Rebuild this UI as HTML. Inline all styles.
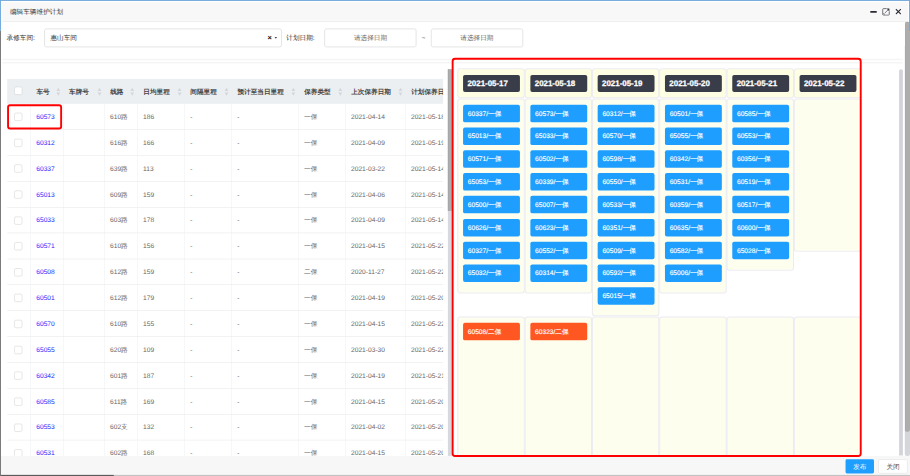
<!DOCTYPE html>
<html><head><meta charset="utf-8"><title>plan</title><style>
*{box-sizing:border-box;margin:0;padding:0}
html,body{width:910px;height:476px;overflow:hidden;background:#fff}
body{font-family:"Liberation Sans",sans-serif;}
#root{position:absolute;left:0;top:0;width:1920px;height:1005px;transform:scale(0.47396);transform-origin:0 0;font-size:14px;color:#666;overflow:hidden;background:#fff;text-rendering:geometricPrecision}
.abs{position:absolute}
.title{left:4.6px;top:4.6px;width:1911px;height:38.2px;background:#f8f8f8}
.ttext{left:21px;top:4.6px;line-height:38px;font-size:14px;color:#333;white-space:nowrap}
.inp{height:40.5px;top:59.9px;border:2px solid #e4e4e4;border-radius:5px;background:#fff;font-size:14px;line-height:36.5px;white-space:nowrap}
.lab{top:60px;line-height:40.5px;font-size:14px;color:#2b2b2b;white-space:nowrap}
table{border-collapse:collapse;table-layout:fixed}
th{height:52.6px;font-weight:bold;color:#444;text-align:left;font-size:14px;padding:2.5px 0 0 12px;line-height:20px;position:relative;white-space:nowrap}
th:first-child{padding-left:11.2px}
td{height:54.64px;border-bottom:1px solid #e4e4e4;border-right:1px solid #eceef3;padding:0 0 0 11.2px;font-size:14px;line-height:20px;color:#666;white-space:nowrap;overflow:hidden}
td a{color:#1c1cff;text-decoration:none}
.cb{display:block;width:17px;height:17px;border:1.6px solid #cdcdcd;border-radius:3.5px;background:#fff;margin-left:4.5px;position:relative;top:0.7px}
th .cb{top:-2px}
.sort{position:absolute;right:5.8px;top:19.1px;width:9px;height:17px}
.sort:before,.sort:after{content:"";position:absolute;left:0;border:4.5px solid transparent}
.sort:before{top:0;border-bottom:7.5px solid #d3d6da;border-top:0}
.sort:after{bottom:0;border-top:7.5px solid #d3d6da;border-bottom:0}
.cell{position:absolute;width:137.8px;background:#fefeef;box-shadow:0 0 0 2.2px #ebebf3;border-radius:4px;padding:11px 8.3px 0 10.3px}
.cell.hd{background:#fefee2}
.pill{height:36.4px;border-radius:4px;background:#393d49;color:#fff;font-weight:bold;font-size:16.7px;line-height:38px;padding-left:8.8px;white-space:nowrap;margin-top:0.6px;-webkit-text-stroke:0.55px #fff}
.it{height:37px;border-radius:4px;background:#1e9fff;color:#fff;font-size:14px;line-height:37px;padding-left:9.5px;margin-bottom:11.2px;white-space:nowrap;-webkit-text-stroke:0.3px #fff}
.it.o{background:#ff5722}
</style></head><body><div id="root">
<div class="abs title"></div>
<div class="abs" style="left:4.6px;top:44.3px;width:1911px;height:2px;background:#ececec"></div>
<div class="abs ttext">编辑车辆维护计划</div>
<div class="abs" style="left:1835.6px;top:23.42px;width:14.77px;height:4.01px;background:#2b2b36;border-radius:1px"></div>
<svg class="abs" style="left:1860.92px;top:16.67px" width="16.67" height="16.25" viewBox="0 0 16 16"><path d="M9 1.2H2.6A1.4 1.4 0 0 0 1.2 2.6V13.4A1.4 1.4 0 0 0 2.6 14.8H13.4A1.4 1.4 0 0 0 14.8 13.4V7" fill="none" stroke="#6a6a74" stroke-width="2"/><path d="M5 11L13 3" fill="none" stroke="#62626c" stroke-width="1.7"/><path d="M9 1H15V7Z" fill="#34343f"/><path d="M2.5 10.5A3 3 0 0 0 5.5 13.5" fill="none" stroke="#7a7a84" stroke-width="1.6"/></svg>
<svg class="abs" style="left:1888.56px;top:18.04px" width="12.87" height="13.08" viewBox="0 0 12 12"><path d="M1 1L11 11M11 1L1 11" fill="none" stroke="#262630" stroke-width="2.3"/></svg>
<div class="abs lab" style="left:13.8px">承修车间:</div>
<div class="abs inp" style="left:92.8px;width:502.2px;padding-left:11.5px;color:#333">惠山车间</div>
<div class="abs" style="left:564.2px;top:59.5px;line-height:40px;font-size:15.5px;font-weight:bold;color:#222">×</div>
<div class="abs" style="left:579.3px;top:77.5px;width:0;height:0;border:3.8px solid transparent;border-top:4.6px solid #555;border-bottom:0"></div>
<div class="abs lab" style="left:604px">计划日期:</div>
<div class="abs inp" style="left:684.2px;width:195.2px;text-align:center;color:#666">请选择日期</div>
<div class="abs lab" style="left:889.5px">~</div>
<div class="abs inp" style="left:908.5px;width:195.2px;text-align:center;color:#666">请选择日期</div>
<div class="abs" style="left:4.6px;top:124.4px;width:1900px;height:2.4px;background:#f5f5f5"></div>
<div class="abs" style="left:4.6px;top:131.2px;width:1900px;height:2.4px;background:#f5f5f5"></div>
<div class="abs" style="left:14.8px;top:166px;width:919.88px;height:795.9px;overflow:hidden">
<div class="abs" style="left:0;top:0;width:100%;height:52.6px;background:#ebeff2"></div>
<table style="position:relative;width:967.7px"><colgroup><col style="width:50px"><col style="width:69px"><col style="width:86.7px"><col style="width:69.8px"><col style="width:99.2px"><col style="width:99.4px"><col style="width:140.9px"><col style="width:99.2px"><col style="width:126.5px"><col style="width:127px"></colgroup>
<tr>
<th><span class="cb"></span></th>
<th>车号<span class="sort"></span></th>
<th>车牌号<span class="sort"></span></th>
<th>线路<span class="sort"></span></th>
<th>日均里程<span class="sort"></span></th>
<th>间隔里程<span class="sort"></span></th>
<th>预计至当日里程<span class="sort"></span></th>
<th>保养类型<span class="sort"></span></th>
<th>上次保养日期<span class="sort"></span></th>
<th>计划保养日期<span class="sort"></span></th>
</tr>
<tr><td><span class="cb"></span></td><td><a>60573</a></td><td></td><td>610路</td><td>186</td><td>-</td><td>-</td><td>一保</td><td>2021-04-14</td><td>2021-05-18</td></tr>
<tr><td><span class="cb"></span></td><td><a>60312</a></td><td></td><td>616路</td><td>166</td><td>-</td><td>-</td><td>一保</td><td>2021-04-09</td><td>2021-05-19</td></tr>
<tr><td><span class="cb"></span></td><td><a>60337</a></td><td></td><td>639路</td><td>113</td><td>-</td><td>-</td><td>一保</td><td>2021-03-22</td><td>2021-05-14</td></tr>
<tr><td><span class="cb"></span></td><td><a>65013</a></td><td></td><td>609路</td><td>159</td><td>-</td><td>-</td><td>一保</td><td>2021-04-06</td><td>2021-05-14</td></tr>
<tr><td><span class="cb"></span></td><td><a>65033</a></td><td></td><td>603路</td><td>178</td><td>-</td><td>-</td><td>一保</td><td>2021-04-09</td><td>2021-05-14</td></tr>
<tr><td><span class="cb"></span></td><td><a>60571</a></td><td></td><td>610路</td><td>156</td><td>-</td><td>-</td><td>一保</td><td>2021-04-15</td><td>2021-05-22</td></tr>
<tr><td><span class="cb"></span></td><td><a>60508</a></td><td></td><td>612路</td><td>159</td><td>-</td><td>-</td><td>二保</td><td>2020-11-27</td><td>2021-05-22</td></tr>
<tr><td><span class="cb"></span></td><td><a>60501</a></td><td></td><td>612路</td><td>179</td><td>-</td><td>-</td><td>一保</td><td>2021-04-19</td><td>2021-05-20</td></tr>
<tr><td><span class="cb"></span></td><td><a>60570</a></td><td></td><td>610路</td><td>155</td><td>-</td><td>-</td><td>一保</td><td>2021-04-15</td><td>2021-05-22</td></tr>
<tr><td><span class="cb"></span></td><td><a>65055</a></td><td></td><td>620路</td><td>109</td><td>-</td><td>-</td><td>一保</td><td>2021-03-30</td><td>2021-05-22</td></tr>
<tr><td><span class="cb"></span></td><td><a>60342</a></td><td></td><td>601路</td><td>187</td><td>-</td><td>-</td><td>一保</td><td>2021-04-19</td><td>2021-05-21</td></tr>
<tr><td><span class="cb"></span></td><td><a>60585</a></td><td></td><td>611路</td><td>169</td><td>-</td><td>-</td><td>一保</td><td>2021-04-15</td><td>2021-05-20</td></tr>
<tr><td><span class="cb"></span></td><td><a>60553</a></td><td></td><td>602支</td><td>132</td><td>-</td><td>-</td><td>一保</td><td>2021-04-02</td><td>2021-05-20</td></tr>
<tr><td><span class="cb"></span></td><td><a>60531</a></td><td></td><td>602路</td><td>168</td><td>-</td><td>-</td><td>一保</td><td>2021-04-15</td><td>2021-05-20</td></tr>
<tr><td><span class="cb"></span></td><td><a>60519</a></td><td></td><td>603路</td><td>150</td><td>-</td><td>-</td><td>一保</td><td>2021-04-10</td><td>2021-05-21</td></tr>
</table></div>
<div class="abs" style="left:945.44px;top:145.58px;width:8.44px;height:816.31px;background:#d7d9df"></div>
<div class="abs" style="left:945.44px;top:145.58px;width:8.44px;height:299.6px;background:#adadad;border-left:1px solid #9a9a9a"></div>
<div class="cell hd" style="left:967.17px;top:146.43px;height:58.44px"><div class="pill">2021-05-17</div></div>
<div class="cell" style="left:967.17px;top:209.72px;height:407.2px"><div class="it">60337/一保</div><div class="it">65013/一保</div><div class="it">60571/一保</div><div class="it">65053/一保</div><div class="it">60500/一保</div><div class="it">60626/一保</div><div class="it">60327/一保</div><div class="it">65032/一保</div></div>
<div class="cell" style="left:967.17px;top:669.68px;height:296.43px;border-bottom-left-radius:0;border-bottom-right-radius:0"><div class="it o">60508/二保</div></div>
<div class="cell hd" style="left:1109.17px;top:146.43px;height:58.44px"><div class="pill">2021-05-18</div></div>
<div class="cell" style="left:1109.17px;top:209.72px;height:407.2px"><div class="it">60573/一保</div><div class="it">65033/一保</div><div class="it">60502/一保</div><div class="it">60339/一保</div><div class="it">65007/一保</div><div class="it">60623/一保</div><div class="it">60552/一保</div><div class="it">60314/一保</div></div>
<div class="cell" style="left:1109.17px;top:669.68px;height:296.43px;border-bottom-left-radius:0;border-bottom-right-radius:0"><div class="it o">60323/二保</div></div>
<div class="cell hd" style="left:1251.16px;top:146.43px;height:58.44px"><div class="pill">2021-05-19</div></div>
<div class="cell" style="left:1251.16px;top:209.72px;height:455.4px"><div class="it">60312/一保</div><div class="it">60570/一保</div><div class="it">60598/一保</div><div class="it">60550/一保</div><div class="it">60533/一保</div><div class="it">60351/一保</div><div class="it">60509/一保</div><div class="it">60592/一保</div><div class="it">65015/一保</div></div>
<div class="cell" style="left:1251.16px;top:669.68px;height:296.43px;border-bottom-left-radius:0;border-bottom-right-radius:0"></div>
<div class="cell hd" style="left:1393.16px;top:146.43px;height:58.44px"><div class="pill">2021-05-20</div></div>
<div class="cell" style="left:1393.16px;top:209.72px;height:407.2px"><div class="it">60501/一保</div><div class="it">65055/一保</div><div class="it">60342/一保</div><div class="it">60531/一保</div><div class="it">60359/一保</div><div class="it">60635/一保</div><div class="it">60582/一保</div><div class="it">65006/一保</div></div>
<div class="cell" style="left:1393.16px;top:669.68px;height:296.43px;border-bottom-left-radius:0;border-bottom-right-radius:0"></div>
<div class="cell hd" style="left:1535.15px;top:146.43px;height:58.44px"><div class="pill">2021-05-21</div></div>
<div class="cell" style="left:1535.15px;top:209.72px;height:359.0px"><div class="it">60585/一保</div><div class="it">60553/一保</div><div class="it">60356/一保</div><div class="it">60519/一保</div><div class="it">60517/一保</div><div class="it">60600/一保</div><div class="it">65028/一保</div></div>
<div class="cell" style="left:1535.15px;top:669.68px;height:296.43px;border-bottom-left-radius:0;border-bottom-right-radius:0"></div>
<div class="cell hd" style="left:1677.15px;top:146.43px;height:58.44px"><div class="pill">2021-05-22</div></div>
<div class="cell" style="left:1677.15px;top:209.72px;height:319px"></div>
<div class="cell" style="left:1677.15px;top:669.68px;height:296.43px;border-bottom-left-radius:0;border-bottom-right-radius:0"></div>
<div class="abs" style="left:953.24px;top:122.37px;width:864.42px;height:841.42px;border:4.85px solid #ff0000;border-radius:7.17px;z-index:10"></div>
<div class="abs" style="left:14.77px;top:219.85px;width:116.68px;height:53.17px;border:4.64px solid #ff0000;border-radius:6.33px;z-index:10"></div>
<div class="abs" style="left:1896.78px;top:145.58px;width:8.02px;height:815.68px;background:#d3d4d9;border-radius:4.01px 4.01px 0 0"></div>
<div class="abs" style="left:1909.44px;top:97.05px;width:10.97px;height:865.05px;background:#d5d6db;border-radius:0 0 4.22px 4.22px"></div>
<div class="abs" style="left:1909.44px;top:46.0px;width:10.97px;height:865.05px;background:#adadad;border-radius:4.64px;border-left:1px solid #a0a0a0"></div>
<div class="abs" style="left:2px;top:962.11px;width:1918px;height:40.09px;background:#f7f7f7"></div>
<div class="abs" style="left:1784.33px;top:968.86px;width:59.5px;height:30.17px;background:#1e9fff;border-radius:3px;color:#fff;font-size:14px;line-height:30.17px;text-align:center">发布</div>
<div class="abs" style="left:1853.32px;top:968.86px;width:62.03px;height:30.17px;background:#fff;border:1px solid #dcdcdc;border-radius:3px;color:#555;font-size:14px;line-height:28.17px;text-align:center">关闭</div>
<div class="abs" style="left:0;top:1001.98px;width:1920px;height:3px;background:#c2c2c2"></div>
<div class="abs" style="left:0;top:1001.98px;width:239.89px;height:3px;background:#5a5a5a"></div>
<div class="abs" style="left:0;top:0;width:1920px;height:2.2px;background:linear-gradient(#5b9ad6,#86b7e3)"></div>
<div class="abs" style="left:0;top:0;width:1.9px;height:64.98px;background:#6ea9de"></div>
<div class="abs" style="left:0;top:64.98px;width:1.9px;height:939.32px;background:#747474"></div>
<div class="abs" style="left:1917.57px;top:0;width:3px;height:65.2px;background:#6ea9de"></div>
</div></body></html>
